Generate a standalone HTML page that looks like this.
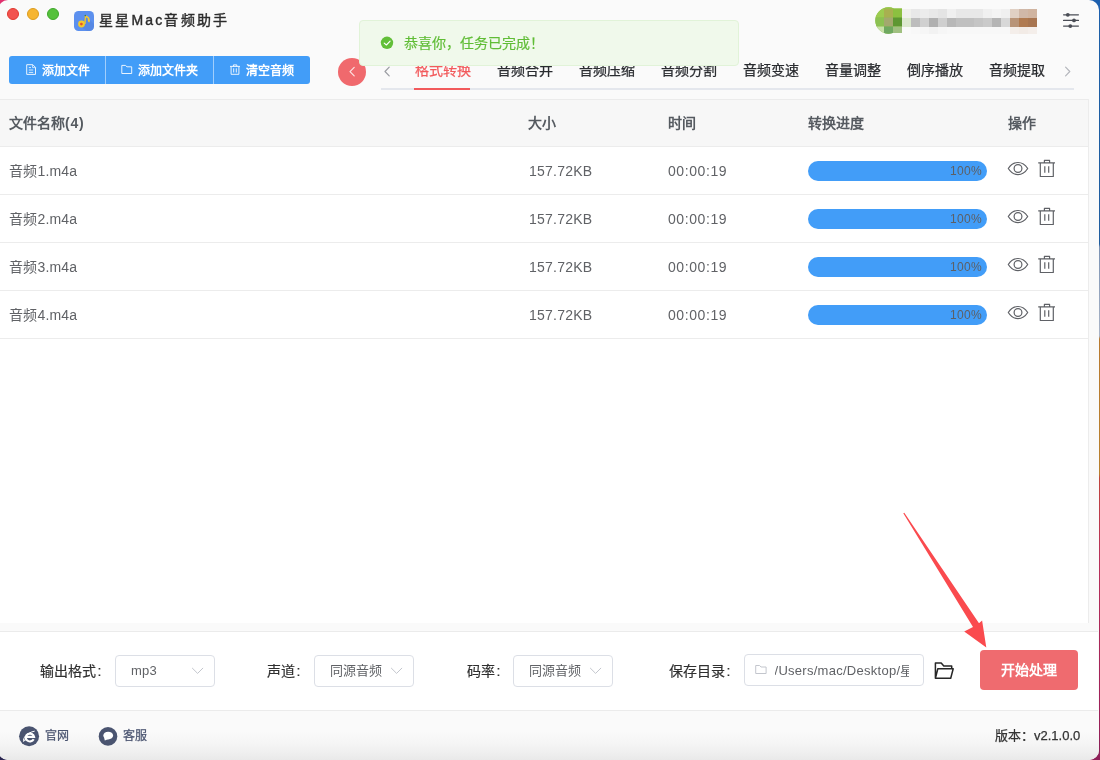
<!DOCTYPE html>
<html lang="zh-CN">
<head>
<meta charset="utf-8">
<title>星星Mac音频助手</title>
<style>
*{box-sizing:border-box;margin:0;padding:0}
html,body{width:1100px;height:760px;overflow:hidden}
body{font-family:"Liberation Sans",sans-serif;position:relative;
  background:linear-gradient(180deg,#1d5fa8 0px,#1f5c9e 244px,#7c93b4 247px,#aab4c6 336px,#b87a30 339px,#b8802e 474px,#c0443c 478px,#b8305a 560px,#a02058 700px,#8e2058 760px);}
.desk-tl{position:absolute;left:0;top:0;width:20px;height:20px;background:#e0306e}
.desk-tr{position:absolute;right:0;top:0;width:20px;height:20px;background:#1c5fae}
.desk-bl{position:absolute;left:0;bottom:0;width:20px;height:20px;background:#2a2550}
.desk-br{position:absolute;right:0;bottom:0;width:20px;height:20px;background:#8e2058}
.win{position:absolute;left:-2px;top:0;width:1100.6px;height:760.2px;background:#fafafa;border-radius:10px;overflow:hidden;will-change:transform}
.abs{position:absolute}
/* title bar */
.tl{position:absolute;top:8px;width:12px;height:12px;border-radius:50%}
.title{position:absolute;left:99px;top:10px;height:20px;line-height:20px;font-size:14px;letter-spacing:2.2px;color:#2c2c2c;-webkit-text-stroke:.4px #2c2c2c;white-space:nowrap}
/* toolbar */
.btns{position:absolute;left:9px;top:56px;width:301px;height:28px;background:#429df8;border-radius:3px}
.bt{position:absolute;top:61px;height:20px;line-height:20px;font-size:12px;font-weight:bold;color:#fff;white-space:nowrap}
.tab{position:absolute;top:60px;height:20px;line-height:20px;font-size:14px;color:#2a2c30;-webkit-text-stroke:.25px currentColor;white-space:nowrap}
/* table */
.th{position:absolute;top:113px;height:20px;line-height:20px;font-size:14px;font-weight:bold;color:#555a60;white-space:nowrap}
.td{position:absolute;height:20px;line-height:20px;font-size:14px;color:#606266;white-space:nowrap}
.hl{position:absolute;left:0;width:1088px;height:1px;background:#ececec}
.prog{position:absolute;left:808px;width:179px;height:20px;border-radius:10px;background:#429df8;color:#5d6066;font-size:12px;line-height:20px;text-align:right;padding-right:5px;letter-spacing:.35px}
/* bottom */
.lbl{position:absolute;top:661px;height:20px;line-height:20px;font-size:14px;color:#303030;-webkit-text-stroke:.2px currentColor;white-space:nowrap}
.sel{position:absolute;top:655px;width:100px;height:32px;border:1px solid #dcdfe6;border-radius:4px;background:#fff;font-size:13px;color:#606266;line-height:30px;padding-left:15px;white-space:nowrap}
.foot{position:absolute;font-size:12px;color:#4a5470;-webkit-text-stroke:.25px currentColor;height:20px;line-height:20px;top:726px;white-space:nowrap}
</style>
</head>
<body>
<div class="desk-tl"></div><div class="desk-tr"></div><div class="desk-bl"></div><div class="desk-br"></div>
<div class="win"><div class="abs" style="left:2px;top:0;width:1098.6px;height:760px">

<!-- title bar -->
<div class="tl" style="left:7px;background:#f2524e;border:1px solid #e0392f"></div>
<div class="tl" style="left:27px;background:#f6b530;border:1px solid #dc9c1e"></div>
<div class="tl" style="left:47px;background:#55c13c;border:1px solid #3fa82b"></div>
<svg class="abs" style="left:74px;top:11px" width="20" height="20" viewBox="0 0 20 20">
  <rect x="0" y="0" width="20" height="20" rx="4.5" fill="#5c90ee"/>
  <path d="M11.5 4.5 L20 13 V15.5 A4.5 4.5 0 0 1 15.5 20 H13 L6 15.5 Z" fill="#4f7fd6" opacity=".45"/>
  <path d="M10.2 13 L10.9 4.2 C13 4.6 15.9 6 15.9 9.2 C15.9 10.4 15.6 11.2 15.2 11.4 C14.2 11.4 13.6 9.6 13.8 7.6 C13.2 6.8 12.6 6.5 12 6.4 L11.6 13 Z" fill="#f4c92c"/>
  <circle cx="7.5" cy="13" r="3.4" fill="#f4c92c"/>
  <circle cx="7.4" cy="13.1" r="1.35" fill="#e4502e"/>
  <circle cx="11.3" cy="4.6" r=".8" fill="#3c7a4a"/>
</svg>
<svg class="abs" style="left:870px;top:4px" width="175" height="34" viewBox="870 4 175 34" shape-rendering="crispEdges"><defs><clipPath id="av"><circle cx="888.5" cy="20.5" r="13.2"/><rect x="888.5" y="8.5" width="13.5" height="24.5"/></clipPath></defs><g clip-path="url(#av)" shape-rendering="auto"><rect x="870" y="4" width="40" height="34" fill="#8cc040"/><rect x="875" y="8.5" width="9" height="9" fill="#9ccc50"/><rect x="884" y="8.5" width="9" height="9" fill="#a8b050"/><rect x="893" y="8.5" width="9" height="9" fill="#8cc040"/><rect x="875" y="17.5" width="9" height="9" fill="#8cc152"/><rect x="884" y="17.5" width="9" height="9" fill="#a3a86e"/><rect x="893" y="17.5" width="9" height="9" fill="#5d9732"/><rect x="875" y="26.5" width="9" height="9" fill="#c8e0a8"/><rect x="884" y="26.5" width="9" height="9" fill="#6fa860"/><rect x="893" y="26.5" width="9" height="9" fill="#a0c080"/><rect x="875" y="4" width="9" height="4.5" fill="#a4d060"/><rect x="884" y="4" width="9" height="4.5" fill="#98c848"/><rect x="893" y="4" width="9" height="4.5" fill="#90c440"/></g><rect x="902" y="8.5" width="9" height="9" fill="#f0f0ec"/><rect x="911" y="8.5" width="9" height="9" fill="#e8e8e8"/><rect x="920" y="8.5" width="9" height="9" fill="#ececec"/><rect x="929" y="8.5" width="9" height="9" fill="#e8e8e8"/><rect x="938" y="8.5" width="9" height="9" fill="#e4e4e4"/><rect x="947" y="8.5" width="9" height="9" fill="#f0f0f0"/><rect x="956" y="8.5" width="9" height="9" fill="#e8e8e8"/><rect x="965" y="8.5" width="9" height="9" fill="#e8e8e8"/><rect x="974" y="8.5" width="9" height="9" fill="#e8e8e8"/><rect x="983" y="8.5" width="9" height="9" fill="#f0f0f0"/><rect x="992" y="8.5" width="9" height="9" fill="#f4f4f4"/><rect x="1001" y="8.5" width="9" height="9" fill="#f0f0f0"/><rect x="1010" y="8.5" width="9" height="9" fill="#e0d0c4"/><rect x="1019" y="8.5" width="9" height="9" fill="#d0b8a8"/><rect x="1028" y="8.5" width="9" height="9" fill="#d0b4a0"/><rect x="902" y="17.5" width="9" height="9" fill="#dde8d0"/><rect x="911" y="17.5" width="9" height="9" fill="#bdbdbd"/><rect x="920" y="17.5" width="9" height="9" fill="#d0d0d0"/><rect x="929" y="17.5" width="9" height="9" fill="#b0b0b0"/><rect x="938" y="17.5" width="9" height="9" fill="#cfcfcf"/><rect x="947" y="17.5" width="9" height="9" fill="#b8b8b8"/><rect x="956" y="17.5" width="9" height="9" fill="#c0c0c0"/><rect x="965" y="17.5" width="9" height="9" fill="#c0c0c0"/><rect x="974" y="17.5" width="9" height="9" fill="#c5c5c5"/><rect x="983" y="17.5" width="9" height="9" fill="#cacaca"/><rect x="992" y="17.5" width="9" height="9" fill="#b5b5b5"/><rect x="1001" y="17.5" width="9" height="9" fill="#d8d8d8"/><rect x="1010" y="17.5" width="9" height="9" fill="#b89478"/><rect x="1019" y="17.5" width="9" height="9" fill="#b07a50"/><rect x="1028" y="17.5" width="9" height="9" fill="#a87550"/><rect x="902" y="26.5" width="9" height="7" fill="#fafafa"/><rect x="911" y="26.5" width="9" height="7" fill="#f8f8f8"/><rect x="920" y="26.5" width="9" height="7" fill="#f6f6f6"/><rect x="929" y="26.5" width="9" height="7" fill="#f2f2f2"/><rect x="938" y="26.5" width="9" height="7" fill="#f6f6f6"/><rect x="947" y="26.5" width="9" height="7" fill="#f8f8f8"/><rect x="956" y="26.5" width="9" height="7" fill="#f8f8f8"/><rect x="965" y="26.5" width="9" height="7" fill="#f8f8f8"/><rect x="974" y="26.5" width="9" height="7" fill="#f8f8f8"/><rect x="983" y="26.5" width="9" height="7" fill="#f8f8f8"/><rect x="992" y="26.5" width="9" height="7" fill="#f8f8f8"/><rect x="1001" y="26.5" width="9" height="7" fill="#f8f8f8"/><rect x="1010" y="26.5" width="9" height="7" fill="#f4eeea"/><rect x="1019" y="26.5" width="9" height="7" fill="#f2ebe6"/><rect x="1028" y="26.5" width="9" height="7" fill="#f4eeea"/></svg>
<svg class="abs" style="left:1060px;top:10px" width="22" height="20" viewBox="1060 10 22 20">
  <g stroke="#4a4d55" stroke-width="1.3" stroke-linecap="round"><path d="M1063.6 14.8H1078.4M1063.6 20.4H1078.4M1063.6 26.1H1078.4"/></g>
  <g fill="#4a4d55"><circle cx="1067.8" cy="14.8" r="1.9"/><circle cx="1074" cy="20.4" r="1.9"/><circle cx="1070.3" cy="26.1" r="1.9"/></g>
</svg>
<div class="title">星星Mac音频助手</div>

<!-- toolbar -->
<div class="btns"></div>
<div class="abs" style="left:105px;top:56px;width:1px;height:28px;background:rgba(255,255,255,.5)"></div>
<div class="abs" style="left:213px;top:56px;width:1px;height:28px;background:rgba(255,255,255,.5)"></div>
<div class="bt" style="left:42px">添加文件</div>
<div class="bt" style="left:138px">添加文件夹</div>
<div class="bt" style="left:246px">清空音频</div>
<svg class="abs" style="left:20px;top:58px" width="230" height="24" viewBox="20 58 230 24" fill="none" stroke="#fff" stroke-opacity=".88" stroke-width="1">
  <!-- document -->
  <path d="M26.7 64.7H32.8L35.5 67.4V74.4H26.7Z"/><path d="M32.6 64.9V67.6H35.3" stroke-width=".8"/>
  <path d="M28.8 67.6H31M28.8 70H33.2M28.8 72.4H33.2" stroke-width=".9"/>
  <!-- folder -->
  <path d="M121.8 65.4H125.4L127 66.8H131.7V73.5H121.8Z"/>
  <!-- trash -->
  <path d="M230 66.4H240M233.4 66.4V64.9H236.8V66.4M231.1 66.6V74.3H238.9V66.6M233.7 68.3V72.5M236.3 68.3V72.5"/>
</svg>

<!-- tabs -->
<div class="abs" style="left:381px;top:88px;width:693px;height:2px;background:#e4e7ed"></div>
<div class="abs" style="left:414px;top:88px;width:56px;height:2px;background:#f25a5c"></div>
<div class="tab" style="left:414.5px;color:#f25a5c">格式转换</div>
<div class="tab" style="left:497px">音频合并</div>
<div class="tab" style="left:579px">音频压缩</div>
<div class="tab" style="left:661px">音频分割</div>
<div class="tab" style="left:743px">音频变速</div>
<div class="tab" style="left:825px">音量调整</div>
<div class="tab" style="left:907px">倒序播放</div>
<div class="tab" style="left:989px">音频提取</div>
<div class="abs" style="left:338px;top:58px;width:28px;height:28px;border-radius:50%;background:#f0696d"></div>
<svg class="abs" style="left:340px;top:60px" width="740" height="24" viewBox="340 60 740 24" fill="none" stroke-linecap="round" stroke-linejoin="round">
  <path d="M354.2 67.4L350 71.6L354.2 75.8" stroke="#fde3e3" stroke-width="1.2"/>
  <path d="M389.2 67.2L385 71.5L389.2 75.8" stroke="#9a9ca2" stroke-width="1.2"/>
  <path d="M1065.6 67.2L1069.8 71.5L1065.6 75.8" stroke="#b4b6bc" stroke-width="1.2"/>
</svg>

<!-- toast -->
<div class="abs" style="left:359px;top:20px;width:380px;height:46px;background:#f0f9eb;border:1px solid #e1f3d8;border-radius:4px"></div>
<svg class="abs" style="left:378px;top:34px" width="18" height="18" viewBox="378 34 18 18"><circle cx="387" cy="42.8" r="6.2" fill="#62bf38"/><path d="M384.2 43.1L386.4 45L390.1 41.1" fill="none" stroke="#fff" stroke-width="1.1" stroke-linecap="round" stroke-linejoin="round"/></svg>
<div class="abs" style="left:404px;top:33px;height:20px;line-height:20px;font-size:14px;color:#60bd36;-webkit-text-stroke:.2px #60bd36;white-space:nowrap">恭喜你，任务已完成！</div>

<!-- table -->
<div class="abs" style="left:0;top:99px;width:1089px;height:524px;background:#fff;border-right:1px solid #ececec"></div>
<div class="abs" style="left:0;top:99px;width:1088px;height:48px;background:#f7f7f7;border-top:1px solid #ebebeb"></div>
<div class="hl" style="top:146px"></div>
<div class="hl" style="top:194px"></div>
<div class="hl" style="top:242px"></div>
<div class="hl" style="top:290px"></div>
<div class="hl" style="top:338px"></div>
<div class="th" style="left:9px">文件名称<span style="letter-spacing:.8px">(4)</span></div>
<div class="th" style="left:528px">大小</div>
<div class="th" style="left:668px">时间</div>
<div class="th" style="left:808px">转换进度</div>
<div class="th" style="left:1008px">操作</div>

<div class="td" style="left:9px;top:161px;letter-spacing:.2px">音频1.m4a</div>
<div class="td" style="left:9px;top:209px;letter-spacing:.2px">音频2.m4a</div>
<div class="td" style="left:9px;top:257px;letter-spacing:.2px">音频3.m4a</div>
<div class="td" style="left:9px;top:305px;letter-spacing:.2px">音频4.m4a</div>
<div class="td" style="left:529px;top:161px;letter-spacing:.22px">157.72KB</div>
<div class="td" style="left:529px;top:209px;letter-spacing:.22px">157.72KB</div>
<div class="td" style="left:529px;top:257px;letter-spacing:.22px">157.72KB</div>
<div class="td" style="left:529px;top:305px;letter-spacing:.22px">157.72KB</div>
<div class="td" style="left:668px;top:161px;letter-spacing:.58px">00:00:19</div>
<div class="td" style="left:668px;top:209px;letter-spacing:.58px">00:00:19</div>
<div class="td" style="left:668px;top:257px;letter-spacing:.58px">00:00:19</div>
<div class="td" style="left:668px;top:305px;letter-spacing:.58px">00:00:19</div>
<div class="prog" style="top:161px">100%</div>
<div class="prog" style="top:209px">100%</div>
<div class="prog" style="top:257px">100%</div>
<div class="prog" style="top:305px">100%</div>

<svg class="abs" style="left:1000px;top:150px" width="64" height="190" viewBox="1000 150 64 190" fill="none" stroke="#5f6166" stroke-width="1.2" stroke-linejoin="round"><g transform="translate(0,0)">
  <path d="M1008.3 168.5C1010.8 164.6 1014.2 162.5 1018 162.5C1021.8 162.5 1025.2 164.6 1027.7 168.5C1025.2 172.4 1021.8 174.6 1018 174.6C1014.2 174.6 1010.8 172.4 1008.3 168.5Z"/>
  <circle cx="1018" cy="168.5" r="3.9"/>
  <path d="M1038.2 162.9H1055M1044.4 162.7V160.4H1049.6V162.7M1040.3 163.1V176.5H1053.3V163.1M1044.8 166.2V172.8M1048.7 166.2V172.8"/>
</g><g transform="translate(0,48)">
  <path d="M1008.3 168.5C1010.8 164.6 1014.2 162.5 1018 162.5C1021.8 162.5 1025.2 164.6 1027.7 168.5C1025.2 172.4 1021.8 174.6 1018 174.6C1014.2 174.6 1010.8 172.4 1008.3 168.5Z"/>
  <circle cx="1018" cy="168.5" r="3.9"/>
  <path d="M1038.2 162.9H1055M1044.4 162.7V160.4H1049.6V162.7M1040.3 163.1V176.5H1053.3V163.1M1044.8 166.2V172.8M1048.7 166.2V172.8"/>
</g><g transform="translate(0,96)">
  <path d="M1008.3 168.5C1010.8 164.6 1014.2 162.5 1018 162.5C1021.8 162.5 1025.2 164.6 1027.7 168.5C1025.2 172.4 1021.8 174.6 1018 174.6C1014.2 174.6 1010.8 172.4 1008.3 168.5Z"/>
  <circle cx="1018" cy="168.5" r="3.9"/>
  <path d="M1038.2 162.9H1055M1044.4 162.7V160.4H1049.6V162.7M1040.3 163.1V176.5H1053.3V163.1M1044.8 166.2V172.8M1048.7 166.2V172.8"/>
</g><g transform="translate(0,144)">
  <path d="M1008.3 168.5C1010.8 164.6 1014.2 162.5 1018 162.5C1021.8 162.5 1025.2 164.6 1027.7 168.5C1025.2 172.4 1021.8 174.6 1018 174.6C1014.2 174.6 1010.8 172.4 1008.3 168.5Z"/>
  <circle cx="1018" cy="168.5" r="3.9"/>
  <path d="M1038.2 162.9H1055M1044.4 162.7V160.4H1049.6V162.7M1040.3 163.1V176.5H1053.3V163.1M1044.8 166.2V172.8M1048.7 166.2V172.8"/>
</g></svg>

<!-- bottom panel -->
<div class="abs" style="left:0;top:631px;width:1098px;height:80px;background:#fff;border-top:1px solid #ebebeb;border-bottom:1px solid #ebebeb"></div>
<div class="lbl" style="left:40px">输出格式<span style="margin-left:1.5px">:</span></div>
<div class="sel" style="left:115px;letter-spacing:.25px">mp3</div>
<div class="lbl" style="left:267px">声道<span style="margin-left:1.5px">:</span></div>
<div class="sel" style="left:314px">同源音频</div>
<div class="lbl" style="left:467px">码率<span style="margin-left:1.5px">:</span></div>
<div class="sel" style="left:513px">同源音频</div>
<div class="lbl" style="left:669px">保存目录<span style="margin-left:1.5px">:</span></div>
<div class="sel" style="left:744px;top:654px;width:180px;padding-left:0"><div style="position:absolute;left:29.5px;top:1px;width:134px;height:30px;overflow:hidden;letter-spacing:.27px">/Users/mac/Desktop/星星</div></div>
<div class="abs" style="left:980px;top:650px;width:98px;height:40px;border-radius:4px;background:#ef6b6f;color:#fff;font-size:14px;font-weight:bold;line-height:40px;text-align:center">开始处理</div>

<svg class="abs" style="left:180px;top:650px" width="790" height="40" viewBox="180 650 790 40" fill="none" stroke-linecap="round" stroke-linejoin="round">
  <g stroke="#c3c6cd" stroke-width="1">
    <path d="M192.4 668.2L197.6 673.4L202.8 668.2"/>
    <path d="M391.4 668.2L396.6 673.4L401.8 668.2"/>
    <path d="M590.4 668.2L595.6 673.4L600.8 668.2"/>
    <path d="M756.1 665.5H759.6L761 667H766.1V673.5H756.1Z" stroke-width="1"/>
  </g>
  <path d="M935.4 678.2V662.9H941.2L943.8 665.9H951.7V668.6M935.4 678.2L937.8 668.8H953.2L950.7 678.2Z" stroke="#262626" stroke-width="1.5"/>
</svg>

<!-- footer -->
<div class="abs" style="left:0;top:712px;width:1099px;height:48px;background:linear-gradient(180deg,#fafafa 0,#fafafa 40%,#f5f5f5 65%,#efefef 85%,#e9e9e9 100%)"></div>
<svg class="abs" style="left:16px;top:723px" width="106" height="27" viewBox="16 723 106 27">
  <circle cx="29.1" cy="736.3" r="10" fill="#4a5470"/>
  <path d="M33.7 739.3A4.2 3.9 0 1 1 34.1 736.9H26.2" fill="none" stroke="#fff" stroke-width="2.1"/>
  <path d="M23.5 741.3C22.8 738.2 26.2 733 34.3 731.2" fill="none" stroke="#fff" stroke-width="1" stroke-linecap="round"/>
  <path d="M23.6 741.4L27.2 739.6L25.6 737.2Z" fill="#fff"/>
  <circle cx="108" cy="736.4" r="9.3" fill="#4a5470"/>
  <ellipse cx="108.2" cy="735.6" rx="4.9" ry="3.9" fill="#fff"/>
  <path d="M104 737L104.8 740.6L108.5 739Z" fill="#fff"/>
</svg>
<div class="foot" style="left:45px">官网</div>
<div class="foot" style="left:123px">客服</div>
<div class="foot" style="left:995px;font-size:13px;color:#333">版本：v2.1.0.0</div>

<!-- arrow -->
<svg class="abs" style="left:0;top:0" width="1098" height="760" viewBox="0 0 1098 760">
  <polygon points="904.3,512.7 979,623.3 982.1,620.4 986.3,647.4 964.2,631.6 973,627.1 903.3,513.3" fill="#fa4a4e"/>
</svg>

</div></div>
</body>
</html>
